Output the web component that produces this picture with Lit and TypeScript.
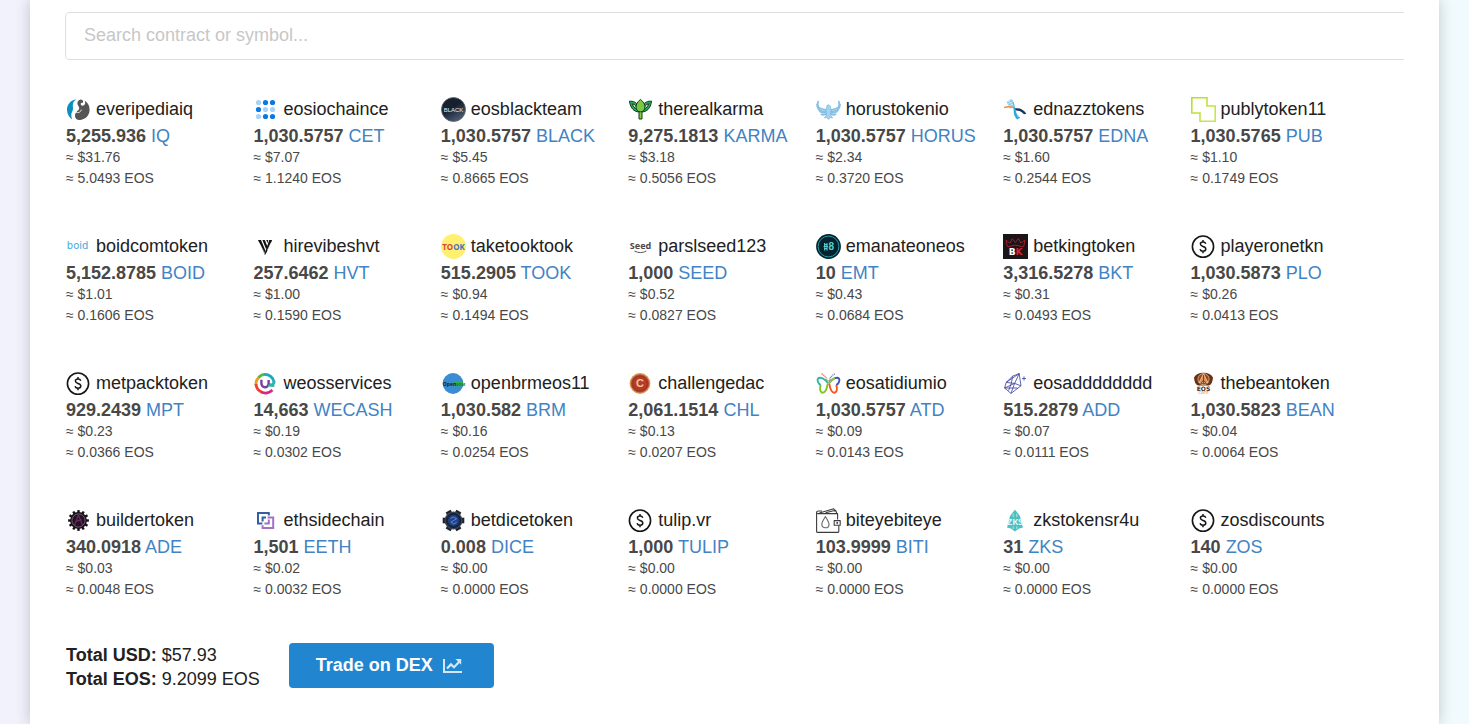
import { LitElement, html, svg, css } from "lit";
import { customElement, property, state } from "lit/decorators.js";

interface Token {
  contract: string;
  amount: string;
  symbol: string;
  usd: string;
  eos: string;
  icon: string;
}

const token = (
  contract: string,
  amount: string,
  symbol: string,
  usd: string,
  eos: string,
  icon: string,
): Token => ({ contract, amount, symbol, usd, eos, icon });

const TOKENS: Token[] = [
  token("everipediaiq", "5,255.936", "IQ", "31.76", "5.0493", "iq"),
  token("eosiochaince", "1,030.5757", "CET", "7.07", "1.1240", "cet"),
  token("eosblackteam", "1,030.5757", "BLACK", "5.45", "0.8665", "black"),
  token("therealkarma", "9,275.1813", "KARMA", "3.18", "0.5056", "karma"),
  token("horustokenio", "1,030.5757", "HORUS", "2.34", "0.3720", "horus"),
  token("ednazztokens", "1,030.5757", "EDNA", "1.60", "0.2544", "edna"),
  token("publytoken11", "1,030.5765", "PUB", "1.10", "0.1749", "pub"),
  token("boidcomtoken", "5,152.8785", "BOID", "1.01", "0.1606", "boid"),
  token("hirevibeshvt", "257.6462", "HVT", "1.00", "0.1590", "hvt"),
  token("taketooktook", "515.2905", "TOOK", "0.94", "0.1494", "took"),
  token("parslseed123", "1,000", "SEED", "0.52", "0.0827", "seed"),
  token("emanateoneos", "10", "EMT", "0.43", "0.0684", "emt"),
  token("betkingtoken", "3,316.5278", "BKT", "0.31", "0.0493", "bkt"),
  token("playeronetkn", "1,030.5873", "PLO", "0.26", "0.0413", "coin"),
  token("metpacktoken", "929.2439", "MPT", "0.23", "0.0366", "coin"),
  token("weosservices", "14,663", "WECASH", "0.19", "0.0302", "wecash"),
  token("openbrmeos11", "1,030.582", "BRM", "0.16", "0.0254", "brm"),
  token("challengedac", "2,061.1514", "CHL", "0.13", "0.0207", "chl"),
  token("eosatidiumio", "1,030.5757", "ATD", "0.09", "0.0143", "atd"),
  token("eosadddddddd", "515.2879", "ADD", "0.07", "0.0111", "add"),
  token("thebeantoken", "1,030.5823", "BEAN", "0.04", "0.0064", "bean"),
  token("buildertoken", "340.0918", "ADE", "0.03", "0.0048", "ade"),
  token("ethsidechain", "1,501", "EETH", "0.02", "0.0032", "eeth"),
  token("betdicetoken", "0.008", "DICE", "0.00", "0.0000", "dice"),
  token("tulip.vr", "1,000", "TULIP", "0.00", "0.0000", "coin"),
  token("biteyebiteye", "103.9999", "BITI", "0.00", "0.0000", "biti"),
  token("zkstokensr4u", "31", "ZKS", "0.00", "0.0000", "zks"),
  token("zosdiscounts", "140", "ZOS", "0.00", "0.0000", "coin"),
];

const gearTeeth = (count: number, width: number, length: number, radius: number, fill: string, shift = 0) =>
  Array.from({ length: count }, (_, i) => svg`
    <rect x=${12.5 - width / 2} y=${12.5 - radius - length} width=${width} height=${length + 2} fill=${fill}
      transform="rotate(${(360 / count) * i + shift} 12.5 12.5)" />`);

const ICONS: Record<string, unknown> = {
  iq: svg`
    <path d="M10.6 2.2 C4.6 3 0.8 7.6 1 13 C1.2 17.2 3.2 20.6 6.2 22.4 C5 19.4 5 16.8 6.2 14.6 C7.6 12.2 6.8 10.4 6.8 8 C6.8 5.4 8.6 3.4 10.6 2.2 Z" fill="#0a8fc0" />
    <path d="M16.4 3 A3.4 3.4 0 0 0 11.4 6.4 C11.6 8.6 13.4 9.4 13.2 11.4 C13 13.4 9.2 14.6 9 18.4 C8.8 21.6 11.4 23.2 14.4 23 C19.6 22.4 23.6 18.2 23.6 12.8 C23.6 8.8 21.6 5.4 18.6 3.6 C19.6 5.6 19.4 7.8 17.4 8.6 C15.6 9.2 14.4 8 14.8 6.6 C15 5.8 16 5.4 16.6 6.2 C17.2 5 17.2 4 16.4 3 Z" fill="#555" />
    <path d="M9.6 15 C12 16.4 14.8 15.2 15.4 12.6" fill="none" stroke="#fff" stroke-width="0.9" />`,
  cet: [0, 1, 2].map((r) => [0, 1, 2].map((c) => svg`
    <circle cx=${5.5 + c * 7} cy=${5.5 + r * 7} r="2.6"
      fill=${(r === 0 && c > 0) || (r === 1 && c === 0) || (r === 2 && c > 0) ? "#0a78e6" : "#a9d2fb"} />`)),
  black: svg`
    <defs><linearGradient id="night" x1="0" y1="0" x2="0.6" y2="1">
      <stop offset="0" stop-color="#1b2029" /><stop offset="0.5" stop-color="#16202e" /><stop offset="1" stop-color="#4b5c72" />
    </linearGradient></defs>
    <circle cx="12.5" cy="12.5" r="12" fill="url(#night)" stroke="#5d6673" stroke-width="0.8" />
    <text x="12.5" y="14.8" font-size="6" fill="#e8edf2" text-anchor="middle">BLACK</text>`,
  karma: svg`
    <g stroke="#123c1c" stroke-width="1" stroke-linejoin="round">
      <path d="M1.4 4.2 C5 4 8.6 5 10.4 9 L11 15 C6 14.6 2.6 11.6 1.4 4.2 Z" fill="#27a55a" />
      <path d="M4.4 6.8 C5.2 9.6 6.6 11.2 9 12 C8.4 9 7 7.4 4.4 6.8 Z" fill="#fff" />
      <path d="M23.6 4.2 C20 4 16.4 5 14.6 9 L14 15 C19 14.6 22.4 11.6 23.6 4.2 Z" fill="#27a55a" />
      <path d="M20.6 6.8 C19.8 9.6 18.4 11.2 16 12 C16.6 9 18 7.4 20.6 6.8 Z" fill="#fff" />
      <path d="M11 13 H14 V22 H11 Z" fill="#86cc3c" />
      <path d="M12.5 2.4 C15.6 5 17 7.4 17 10 C17 13 15 14.8 12.5 14.8 C10 14.8 8 13 8 10 C8 7.4 9.4 5 12.5 2.4 Z" fill="#79c943" />
    </g>`,
  horus: svg`
    <g fill="none" stroke="#86c0e2" stroke-width="1.7" stroke-linecap="round">
      <path d="M2.2 4.6 C0.2 11 5 12.4 9.8 12.8" /><path d="M1 7.4 C1.4 13.6 6 14.6 9.6 14.2" />
      <path d="M3.2 13.4 C5 16.4 7.6 16.2 9.8 15.8" /><path d="M5.4 17.4 C7 18.4 8.6 17.8 10 17.2" />
      <path d="M22.8 4.6 C24.8 11 20 12.4 15.2 12.8" /><path d="M24 7.4 C23.6 13.6 19 14.6 15.4 14.2" />
      <path d="M21.8 13.4 C20 16.4 17.4 16.2 15.2 15.8" /><path d="M19.6 17.4 C18 18.4 16.4 17.8 15 17.2" />
    </g>
    <path d="M11 8.4 L13 7.8 L14.4 9.4 L15 13.6 L14.4 18 L16.6 21 L14.4 20.4 L12.5 22.4 L10.6 20.4 L8.4 21 L10.6 18 L10 13.6 Z" fill="#a5d3ee" stroke="#76b5dc" stroke-width="0.7" />`,
  edna: svg`
    <path d="M3.4 5 L8.4 1.6 L10.8 10 L7 12 Z" fill="#cde9f7" />
    <g stroke="#62b9e2" stroke-width="0.6"><path d="M4 6 L9.4 3.6 M4.8 8 L10 6 M6 10 L10.8 8 M4.4 4.8 L9.8 10.4 M7 2.6 L10.6 7" /></g>
    <path d="M1.2 10.4 C6 9.4 9.8 9.4 12.8 12.2" fill="none" stroke="#f08a3c" stroke-width="1.5" />
    <path d="M12 11.4 C16 10.4 21 12.2 23.4 16.8 L21 17.2 C18.4 14 15.2 13.4 12.4 13.4 Z" fill="#16365c" />
    <path d="M8.2 1.6 C12.6 7 11 11 13.4 15.2 C14.4 17.4 16 19.4 17.2 20.8 L14 22.4 C11 19.2 10.6 16.4 10.6 12.8 C10.8 9 10.4 5.4 8.2 1.6 Z" fill="#2fa9dc" />
    <path d="M14 14 L17.6 19.6 M15.8 14 L19.4 17.6 M13.4 15 L15.4 20" stroke="#fff" stroke-width="0.7" />`,
  pub: svg`
    <defs><linearGradient id="lime" x1="0" y1="0" x2="1" y2="1">
      <stop offset="0" stop-color="#b4e020" /><stop offset="1" stop-color="#c6e75a" />
    </linearGradient></defs>
    <path d="M0.8 0.8 H16 V9 H24.2 V24.2 H9 V16 H0.8 Z" fill="none" stroke="url(#lime)" stroke-width="1.6" />`,
  boid: svg`<text x="11.6" y="15.4" font-size="10" fill="#4aa8dd" text-anchor="middle" class="round">boid</text>`,
  hvt: svg`
    <path d="M5 6 H8 L12.6 17 L11.8 20.6 Z" fill="#111" />
    <path d="M9.4 6 H11.8 L14.4 12.6 L13.2 15.6 Z" fill="#111" />
    <path d="M19.2 6 H16.2 L11.4 20.6 H12.6 Z" fill="#111" />
    <path d="M13.2 6 H15.2 L14.6 9.2 Z" fill="#111" />
    <path d="M6 8.6 L12 20 M18 9 L14.6 16" stroke="#fff" stroke-width="0.6" />`,
  took: svg`
    <circle cx="12.5" cy="12.5" r="12.4" fill="#fff06f" />
    <text x="12.5" y="15.6" font-size="8" font-weight="700" text-anchor="middle" class="narrow"><tspan fill="#d8423f">T</tspan><tspan fill="#d8423f">O</tspan><tspan fill="#3d73c4">O</tspan><tspan fill="#3d73c4">K</tspan></text>`,
  seed: svg`
    <text x="12.5" y="15" font-size="9" font-weight="700" fill="#4a4a4a" text-anchor="middle" class="plain">Seed</text>
    <path d="M6.4 17 Q12.5 20.2 18.4 17" fill="none" stroke="#444" stroke-width="0.9" />`,
  emt: svg`
    <circle cx="12.5" cy="12.5" r="12.4" fill="#06212f" />
    <circle cx="12.5" cy="12.5" r="10.4" fill="none" stroke="#2fa8a8" stroke-width="0.9" />
    <path d="M8.6 9 V12 M11 9 V12 M8.6 10.6 H11 M8.6 13.4 V16.4 M11 13.4 V16.4 M7.6 12.6 H12 M8.6 14.6 H11" stroke="#56d3c8" stroke-width="1.1" />
    <text x="15.2" y="16.4" font-size="10" font-weight="700" fill="#56d3c8" text-anchor="middle">8</text>`,
  bkt: svg`
    <rect width="25" height="25" fill="#1b1418" />
    <path d="M4.4 12.8 L3 6.4 L7 9 L9.2 4.8 L12.4 8.6 L15.4 4.4 L17.8 9 L22 6 L20.6 12.8 M5 12.6 Q12.5 9.8 20 12.6" fill="none" stroke="#a01f2a" stroke-width="1" />
    <text x="12.6" y="20.6" font-size="9" font-weight="700" text-anchor="middle" class="round"><tspan fill="#fff">B</tspan><tspan fill="#e11f2f">K</tspan></text>`,
  coin: svg`
    <circle cx="12" cy="12.6" r="10.6" fill="#fff" stroke="#151515" stroke-width="1.6" />
    <path d="M14.8 9.8 C14.4 8.6 13.4 8 12 8 C10.4 8 9.4 8.9 9.4 10.1 C9.4 11.5 10.5 12 12 12.5 C13.6 13 14.8 13.5 14.8 15 C14.8 16.4 13.6 17.2 12 17.2 C10.4 17.2 9.4 16.4 9 15.2 M12 6 V8 M12 17.2 V19.2" fill="none" stroke="#151515" stroke-width="1.5" />`,
  wecash: svg`
    <g fill="none" stroke-width="2.8">
      <path d="M5.4 6.8 A9.2 9.2 0 0 1 12 3.4" stroke="#56b848" /><path d="M11.4 3.4 A9.2 9.2 0 0 1 21 11" stroke="#17a9c4" />
      <path d="M5.6 6.4 A9.2 9.2 0 0 0 3 14" stroke="#f09a1e" /><path d="M3 13 A9.2 9.2 0 0 0 9 21.2" stroke="#ee4036" />
      <path d="M8.2 21 A9.6 9.6 0 0 0 19.4 19" stroke="#d42a86" />
      <path d="M20.9 10 A3 3 0 0 1 16 13" stroke="#2fb7a0" />
    </g>
    <path d="M8.4 8.8 V12.4 A3.6 3.6 0 0 0 15.6 12.8 V9" fill="none" stroke="#7a3fa0" stroke-width="2.4" />
    <path d="M15 14.6 L21.4 15" stroke="#2fb7a0" stroke-width="2" />`,
  brm: svg`
    <circle cx="12" cy="12.5" r="10.4" fill="#3a8dd0" />
    <rect x="12.4" y="10" width="9.6" height="5.2" fill="#35ad4c" />
    <text x="1.8" y="14.6" font-size="5" font-weight="700" fill="#14212c" class="narrow">Open<tspan fill="#1f7d3a" font-size="4">BRM</tspan></text>`,
  chl: svg`
    <circle cx="12" cy="12.5" r="10.4" fill="#cf9a4e" />
    <circle cx="12" cy="12.5" r="8.6" fill="#a93226" stroke="#b8392b" stroke-width="0.8" />
    <circle cx="12" cy="12.5" r="6.8" fill="#b53a2c" />
    <text x="12" y="16.4" font-size="11" font-weight="700" fill="#efc98a" text-anchor="middle">C</text>`,
  atd: svg`
    <g fill="none" stroke-width="1.9" stroke-linejoin="round">
      <path d="M12 12 C9 8 4 5.4 2 7.6 C0.8 9.4 2.4 13 4.8 14" stroke="#2eb6a6" />
      <path d="M4.8 14 C3.4 17 4 21.4 6.6 21.8 C9.4 21.8 11 17.4 11.8 12.4" stroke="#7fc51f" />
      <path d="M13 12 C16 8 21 5.4 23 7.6 C24.2 9.4 22.6 13 20.2 14" stroke="#3b53c4" />
      <path d="M20.2 14 C21.6 17 21 21.4 18.4 21.8 C15.6 21.8 14 17.4 13.2 12.4" stroke="#ef5a22" />
      <path d="M13 12 C15 9.4 17 8 19 7.2" stroke="#8ccf32" />
    </g>
    <path d="M11.6 10.4 C10.4 6.4 8 3.8 5 2.6" fill="none" stroke="#e87c55" stroke-width="1.6" stroke-dasharray="1 0.7" />
    <path d="M13.2 10.4 C14 6.6 16 4 19 3" fill="none" stroke="#838aa0" stroke-width="1.6" stroke-dasharray="1 0.7" />`,
  add: svg`
    <g fill="none" stroke="#39409a" stroke-width="0.8" stroke-linejoin="round">
      <path d="M9.6 5.2 L16.2 2.6 L18 14.8 L8 22.4 L1.6 17 L3.2 11.4 Z" />
      <path d="M16.2 2.6 L3.2 11.4 L11.6 12.4 Z M11.6 12.4 L18 14.8 M11.6 12.4 L8 22.4 M11.6 12.4 L1.6 17 M9.6 5.2 L8.4 12 L5.6 19.6 M1.6 17 H14.4" />
      <path d="M21 5.4 V9.6 M19 7.5 H23" />
    </g>`,
  bean: svg`
    <path d="M3 6.4 Q6 1.6 12.5 1.8 Q19 1.6 22 6.4 Q21.6 13 18 14.4 H7 Q3.4 13 3 6.4 Z" fill="#6a3213" />
    <circle cx="12.5" cy="8.2" r="5.6" fill="#8f4a20" stroke="#ecc9a8" stroke-width="0.7" />
    <path d="M12.5 2.8 L17 11.6 H8 Z" fill="#e58d4c" stroke="#f6dfc8" stroke-width="0.6" />
    <path d="M12.5 4 V12 M9.6 12.4 L12.5 9.4 L15.4 12.4" stroke="#6a3213" stroke-width="0.8" fill="none" />
    <text x="12.5" y="19.6" font-size="6" font-weight="700" fill="#4b2713" text-anchor="middle" class="round">EOS</text>
    <text x="12.5" y="23.2" font-size="4" fill="#c78d63" text-anchor="middle" class="round">CAFE</text>`,
  ade: svg`
    ${gearTeeth(12, 2.4, 2.4, 8, "#161216")}
    <circle cx="12.5" cy="12.5" r="8.4" fill="#161216" />
    <circle cx="12.5" cy="12.5" r="6.6" fill="#241224" stroke="#b9a6b9" stroke-width="0.5" />
    <path d="M12.5 7 L16.4 17 M12.5 7 L8.6 17 M10 13.4 L16 11.6" stroke="#6a2a60" stroke-width="1.2" fill="none" />`,
  eeth: svg`
    <g fill="none" stroke-width="2">
      <path d="M9.4 15.4 H5 V5 H15.8 V7.6" stroke="#35609f" />
      <path d="M14.6 9.4 H20.2 V20 H9.6 V17.2" stroke="#a172c6" />
      <path d="M15.8 11.6 V15.4 H11.4" stroke="#a172c6" />
      <path d="M9.6 13.4 V9.4 H13" stroke="#35609f" />
    </g>`,
  dice: svg`
    ${gearTeeth(6, 5.6, 3, 7.8, "#1f2329", 30)}
    <circle cx="12.5" cy="12.5" r="9" fill="#3a4553" />
    <circle cx="12.5" cy="12.5" r="7.2" fill="#16264a" stroke="#161c26" stroke-width="0.8" />
    <circle cx="12.5" cy="12.5" r="5.4" fill="#1f4389" />
    <path d="M9.6 10.4 L12.5 9 L15.6 10.8 L10 14 L12.8 16 L15.6 14.2" fill="none" stroke="#7f9fe0" stroke-width="0.7" />`,
  biti: svg`
    <g fill="none" stroke="#3c3c3c" stroke-width="1.1" stroke-linejoin="round">
      <path d="M21.6 11.4 V5.6 H2 Q0.6 5.6 0.6 4.4 V23.4 Q0.6 24.4 1.8 24.4 H21.6 Q22.8 24.4 22.8 23.4 V17.6" />
      <path d="M0.6 4.2 Q0.8 3 2.4 3 H6 M3.4 5 L17.8 0.8 L19 3.4 M9.6 4.8 L19.6 2.2 L20.8 5.2" />
      <path d="M18.2 12.6 H24.2 V17.2 H18.2 Z" />
      <path d="M9.4 8.6 C11.4 11.8 13 14 13 16.4 C13 18.6 11.4 19.8 9.4 19.8 C7.4 19.8 5.8 18.6 5.8 16.4 C5.8 14 7.4 11.8 9.4 8.6 Z" stroke="#666" />
    </g>
    <rect x="20.4" y="14" width="1.6" height="1.8" fill="#3c3c3c" />`,
  zks: svg`
    <path d="M12 1.8 L14.8 5 L17.2 8.4 L18 13 L20 19.4 L16.2 20.4 L12 23.4 L7.8 20.4 L4 19.4 L6 13 L6.8 8.4 L9.2 5 Z" fill="#4fc0c0" />
    <text x="12" y="17" font-size="9" font-weight="700" fill="#dff5f5" text-anchor="middle" class="narrow">ZKS</text>
    <path d="M10.2 5.6 V9 M13.8 5.6 V9 M10.2 18.4 V21 M13.8 18.4 V21" stroke="#dff5f5" stroke-width="0.7" />`,
};

@customElement("token-card")
class TokenCard extends LitElement {
  @property({ attribute: false }) token!: Token;

  static styles = css`
    :host {
      display: block;
      min-width: 0;
      font-size: 18px;
      color: #484848;
    }
    .name {
      display: flex;
      align-items: center;
      gap: 5px;
      height: 27px;
      color: #212121;
    }
    .icon {
      flex: none;
      width: 25px;
      height: 25px;
      font-family: "Liberation Sans", Arial, sans-serif;
    }
    .round {
      font-family: "DejaVu Sans", sans-serif;
    }
    .plain {
      font-family: "Noto Sans", sans-serif;
    }
    .narrow {
      font-family: "Liberation Sans Narrow", "Open Sans", sans-serif;
    }
    .amount {
      padding-top: 2px;
      line-height: 22px;
      white-space: nowrap;
    }
    .symbol {
      color: #4183c4;
      text-decoration: none;
    }
    .value {
      font-size: 14px;
      line-height: 21px;
    }
  `;

  render() {
    const t = this.token;
    return html`
      <div class="name">
        <svg class="icon" viewBox="0 0 25 25" aria-hidden="true">${ICONS[t.icon]}</svg>
        <span>${t.contract}</span>
      </div>
      <div class="amount"><b>${t.amount}</b> <a class="symbol" href="#${t.symbol}">${t.symbol}</a></div>
      <div class="value">≈ $${t.usd}</div>
      <div class="value">≈ ${t.eos} EOS</div>
    `;
  }
}

@customElement("app-root")
class AppRoot extends LitElement {
  @state() private query = "";

  static styles = css`
    :host {
      display: block;
      box-sizing: border-box;
      min-height: 100vh;
      padding: 0 30px;
      overflow: hidden;
      background: linear-gradient(90deg, #f2f2fd, #f1fbfd);
      font-family: "Liberation Sans", Arial, sans-serif;
      font-size: 18px;
      color: #212121;
    }
    .panel {
      box-sizing: border-box;
      min-height: 100vh;
      padding: 12px 35px 33px;
      background: #fff;
      box-shadow: 0 0 14px rgba(34, 36, 38, 0.24);
    }
    .search {
      overflow: hidden;
    }
    .field {
      display: block;
      box-sizing: border-box;
      width: calc(100% + 20px);
      height: 48px;
      padding: 0 18px 2px;
      border: 1px solid #dededf;
      border-radius: 4px;
      background: #fff;
      font: inherit;
      color: inherit;
      outline: none;
    }
    .field::placeholder {
      color: #c7c7c7;
      opacity: 1;
    }
    .tokens {
      display: grid;
      grid-template-columns: repeat(7, minmax(0, 1fr));
      row-gap: 44px;
      padding: 36px 26px 43px 1px;
    }
    .footer {
      display: flex;
      align-items: flex-start;
      gap: 29px;
      padding-left: 1px;
    }
    .totals {
      line-height: 24px;
    }
    .trade {
      display: flex;
      align-items: center;
      gap: 10px;
      height: 45px;
      padding: 0 31px 0 27px;
      border: 0;
      border-radius: 4px;
      background: #2185d0;
      color: #fff;
      font: inherit;
      font-weight: 700;
      cursor: pointer;
    }
    .chart {
      width: 20px;
      height: 16px;
    }
  `;

  render() {
    const q = this.query.toLowerCase();
    const shown = TOKENS.filter((t) => t.contract.includes(q) || t.symbol.toLowerCase().includes(q));
    return html`
      <main class="panel">
        <div class="search">
          <input
            class="field"
            type="text"
            aria-label="Search contract or symbol"
            placeholder="Search contract or symbol..."
            @input=${(e: Event) => (this.query = (e.target as HTMLInputElement).value)}
          />
        </div>
        <section class="tokens">${shown.map((t) => html`<token-card .token=${t}></token-card>`)}</section>
        <footer class="footer">
          <div class="totals">
            <div><b>Total USD:</b> $57.93</div>
            <div><b>Total EOS:</b> 9.2099 EOS</div>
          </div>
          <button class="trade" type="button">
            Trade on DEX
            <svg class="chart" viewBox="0 0 20 16" aria-hidden="true">
              <path d="M1 1 V14 H19" fill="none" stroke="#d3e7f6" stroke-width="2" />
              <path d="M4 10.6 L8 6.4 L11 9.2 L16 4" fill="none" stroke="#d3e7f6" stroke-width="2.2" />
              <path d="M12.4 1 H18.2 V6.8 Z" fill="#d3e7f6" />
            </svg>
          </button>
        </footer>
      </main>
    `;
  }
}
